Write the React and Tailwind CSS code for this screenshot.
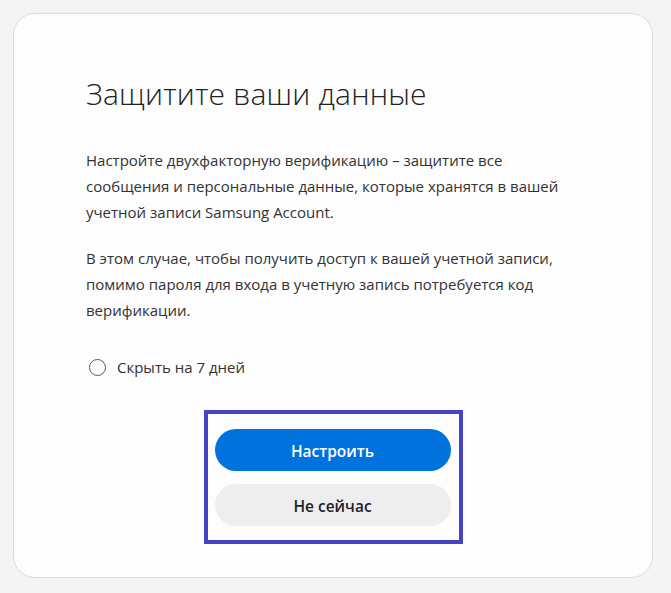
import React, { useState } from 'react';

const App = () => {
  const [hide, setHide] = useState(false);

  return (
    <div className="min-h-[593px] bg-[#f4f4f4] p-[13px] pr-[18px]" style={{ fontFamily: '"Open Sans", "Noto Sans", sans-serif' }}>
      <div className="h-[565px] rounded-[22px] border border-[#dcdcdc] bg-[#fdfdfd] px-[72px] pt-[62px] flex flex-col">
        <h1 className="text-[30px] leading-[36px] font-light text-[#222] tracking-[0.2px]">
          Защитите ваши данные
        </h1>

        <div className="mt-[35px] text-[15px] leading-[26px] text-[#333] pr-[6px]">
          <p>
            Настройте двухфакторную верификацию – защитите все сообщения и персональные данные, которые хранятся в вашей учетной записи Samsung Account.
          </p>
          <p className="mt-[20px]">
            В этом случае, чтобы получить доступ к вашей учетной записи, помимо пароля для входа в учетную запись потребуется код верификации.
          </p>
        </div>

        <label className="mt-[32px] flex items-center gap-[11px] cursor-pointer text-[15px] leading-[24px] text-[#333] pl-[3px]">
          <input type="checkbox" className="hidden" checked={hide} onChange={() => setHide(!hide)} />
          <span className="w-[17px] h-[17px] rounded-full border border-[#555] bg-white flex items-center justify-center">
            {hide && <span className="w-[9px] h-[9px] rounded-full bg-[#0072de]" />}
          </span>
          Скрыть на 7 дней
        </label>

        <div className="mt-[31px] self-center border-4 border-[#4444c4] pl-[7px] pr-[8px] pt-[15px] pb-[14px] flex flex-col gap-[13px]">
          <button className="w-[236px] h-[42px] pt-[3px] rounded-full bg-[#0072de] text-white text-[15.5px] font-semibold">
            Настроить
          </button>
          <button className="w-[236px] h-[42px] pt-[3px] rounded-full bg-[#eeeeee] text-[#222] text-[15.5px] font-semibold">
            Не сейчас
          </button>
        </div>
      </div>
    </div>
  );
};

export default App;
